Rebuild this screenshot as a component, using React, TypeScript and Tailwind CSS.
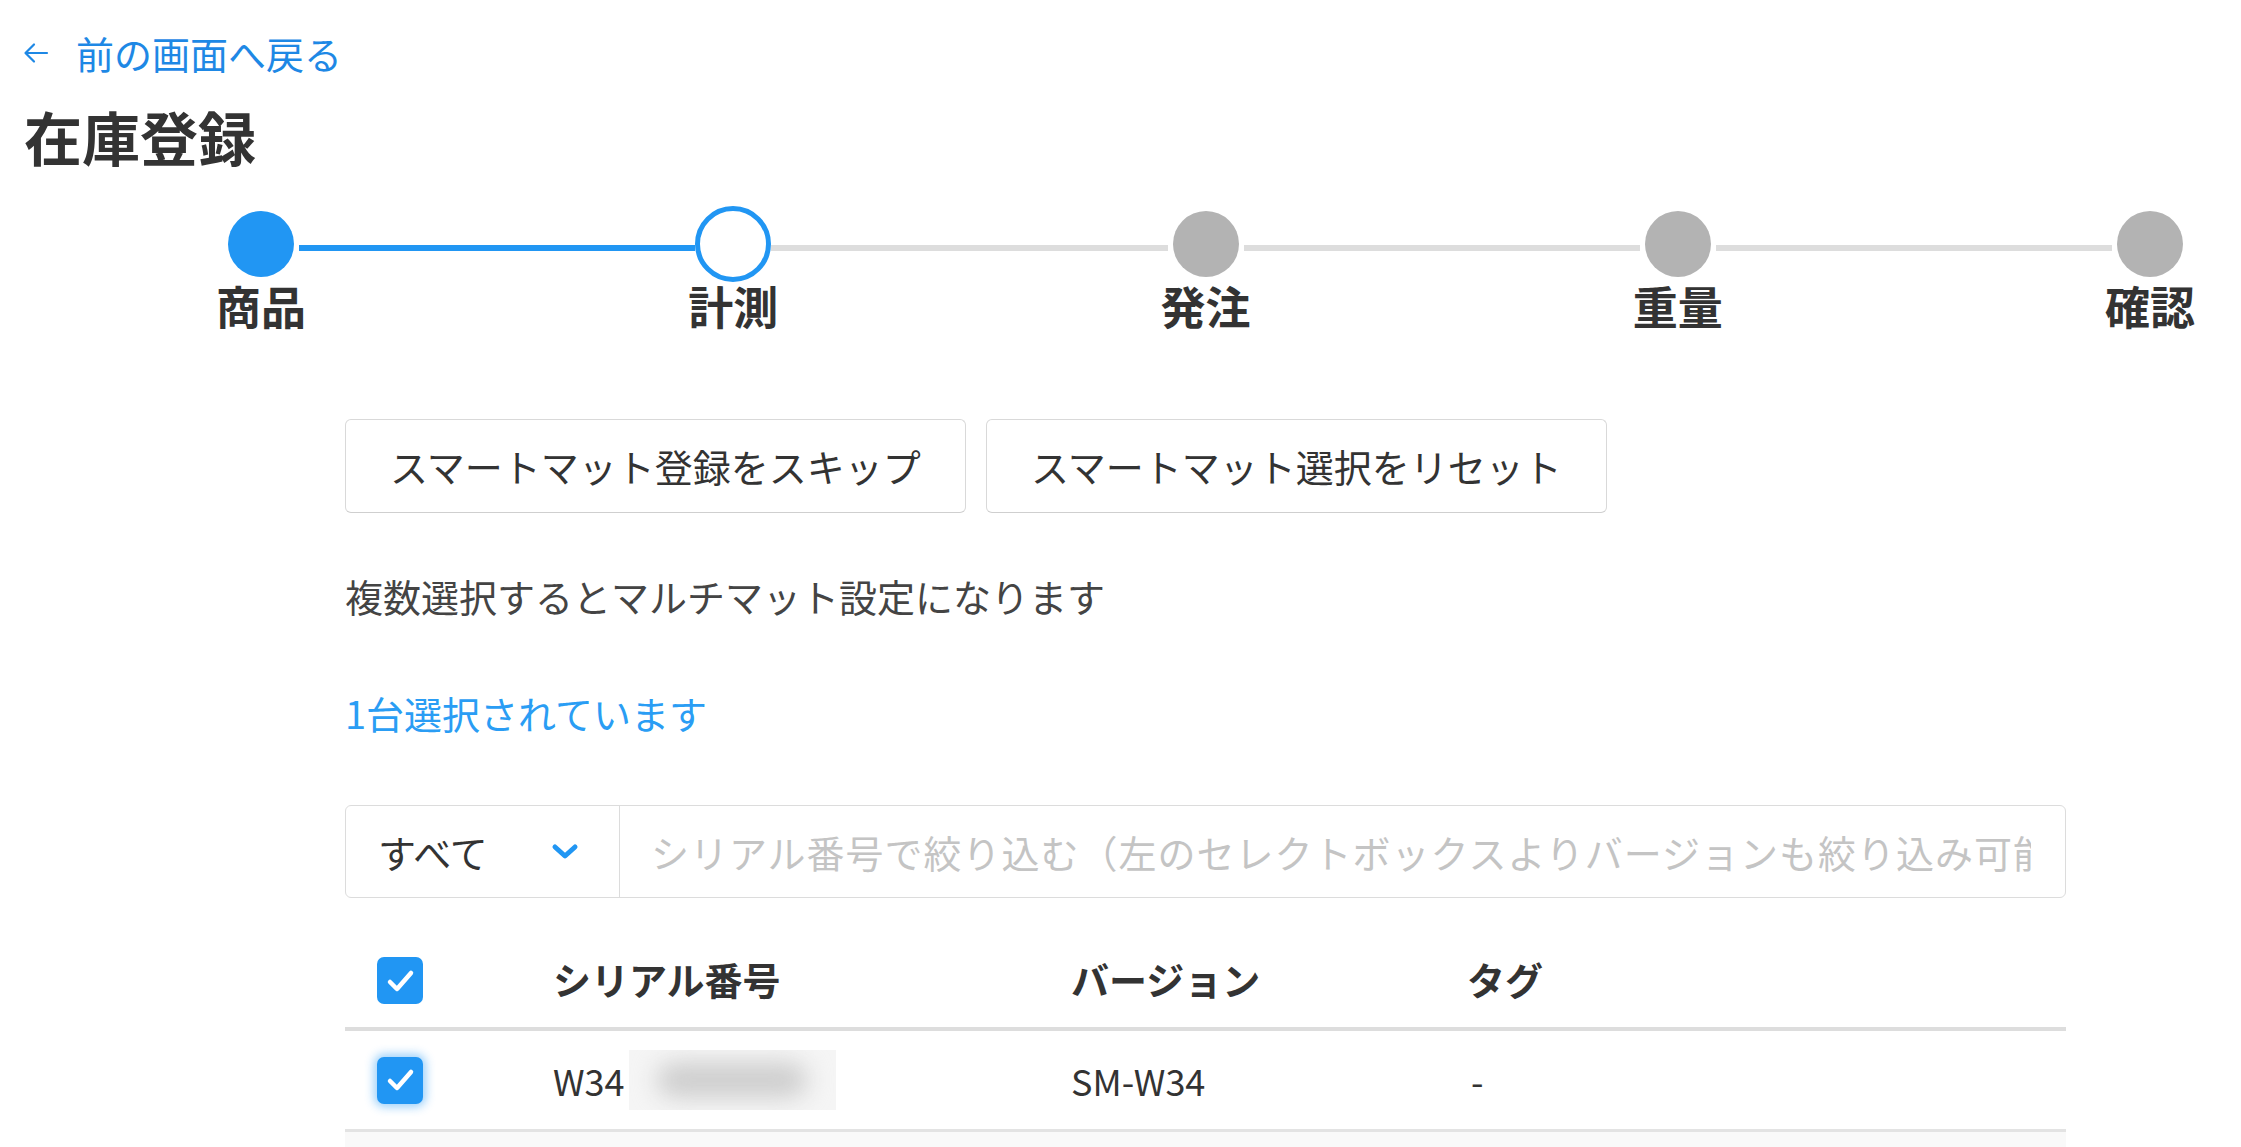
import { Fragment } from 'react';

type StepState = 'done' | 'current' | 'todo';

const steps: { label: string; state: StepState }[] = [
  { label: '商品', state: 'done' },
  { label: '計測', state: 'current' },
  { label: '発注', state: 'todo' },
  { label: '重量', state: 'todo' },
  { label: '確認', state: 'todo' },
];

function StepDot({ state }: { state: StepState }) {
  if (state === 'done') return <div className="w-[66px] h-[66px] rounded-full bg-[#2196f3]" />;
  if (state === 'current')
    return <div className="w-[76px] h-[76px] rounded-full border-[5px] border-[#2196f3] bg-white" />;
  return <div className="w-[66px] h-[66px] rounded-full bg-[#b3b3b3]" />;
}

function Check({ glow }: { glow?: boolean }) {
  return (
    <div
      className={`w-[46px] h-[47px] rounded-[7px] bg-[#2196f3] flex items-center justify-center ${
        glow ? 'shadow-[0_0_10px_3px_rgba(33,150,243,0.45)]' : ''
      }`}
    >
      <svg width="34" height="34" viewBox="0 0 34 34" fill="none" stroke="white" strokeWidth="4.5" strokeLinecap="round" strokeLinejoin="round">
        <path d="M7 18l7 7L28 9" />
      </svg>
    </div>
  );
}

export default function App() {
  return (
    <div className="min-h-screen w-full bg-white text-[#333] font-['Noto_Sans_CJK_JP',sans-serif] overflow-hidden">
      {/* ヘッダー */}
      <div className="pl-[22px] pt-[34px]">
        <a className="flex items-center h-[38px] text-[#1e88e5] text-[38px] leading-none cursor-pointer">
          <svg width="26" height="24" viewBox="0 0 26 24" fill="none" stroke="#1e88e5" strokeWidth="2.2" strokeLinecap="round" strokeLinejoin="round" className="ml-[1px]">
            <path d="M24 12H3" />
            <path d="M11 3.5L2.5 12L11 20.5" />
          </svg>
          <span className="ml-[27px]">前の画面へ戻る</span>
        </a>
        <h1 className="mt-[35px] pl-[2px] text-[58px] font-bold leading-none">在庫登録</h1>
      </div>

      {/* ステッパー */}
      <div className="flex items-start ml-[216px] w-[1979px] mt-[41px]">
        {steps.map((s, i) => (
          <Fragment key={s.label}>
            {i > 0 && (
              <div
                className={`flex-1 h-[6px] mt-[39px] -mx-[7px] ${i === 1 ? 'bg-[#2196f3]' : 'bg-[#dddddd]'}`}
              />
            )}
            <div className="w-[90px] shrink-0 flex flex-col items-center">
              <div className="h-[76px] flex items-center justify-center">
                <StepDot state={s.state} />
              </div>
              <div className="mt-[1px] text-[45px] font-bold leading-none text-[#333] whitespace-nowrap">
                {s.label}
              </div>
            </div>
          </Fragment>
        ))}
      </div>

      {/* 本体 */}
      <div className="ml-[345px] w-[1721px]">
        <div className="mt-[91px] flex gap-[20px]">
          <button className="h-[94px] px-[44px] border border-[#d9d9d9] border-b-[#cfcfcf] rounded-[6px] bg-white text-[38px] leading-none text-[#333] whitespace-nowrap">
            スマートマット登録をスキップ
          </button>
          <button className="h-[94px] px-[44px] border border-[#d9d9d9] border-b-[#cfcfcf] rounded-[6px] bg-white text-[38px] leading-none text-[#333] whitespace-nowrap">
            スマートマット選択をリセット
          </button>
        </div>

        <p className="mt-[64px] text-[38px] leading-none text-[#444]">複数選択するとマルチマット設定になります</p>
        <p className="mt-[79px] text-[38px] leading-none text-[#2a9df4]">1台選択されています</p>

        <div className="mt-[73px] h-[93px] flex border border-[#dcdcdc] rounded-[6px] overflow-hidden">
          <div className="w-[274px] shrink-0 flex items-center justify-between pl-[32px] pr-[39px] border-r border-[#dcdcdc]">
            <span className="text-[38px] leading-none text-[#333]">すべて</span>
            <svg width="30" height="20" viewBox="0 0 30 20" fill="none" stroke="#2196f3" strokeWidth="5" strokeLinecap="round" strokeLinejoin="round">
              <path d="M5 5l10 9L25 5" />
            </svg>
          </div>
          <input
            className="flex-1 min-w-0 pl-[31px] pr-[34px] text-[38px] tracking-[1px] leading-none text-[#333] outline-none placeholder:text-[#c4c4c4]"
            placeholder="シリアル番号で絞り込む（左のセレクトボックスよりバージョンも絞り込み可能）"
          />
        </div>

        {/* テーブル */}
        <div className="mt-[36px]">
          <div className="h-[97px] flex items-center border-b-[4px] border-[#dddddd] text-[38px] font-bold leading-none">
            <div className="w-[208px] shrink-0 pl-[32px]">
              <Check />
            </div>
            <div className="w-[518px] shrink-0 -mt-[4px]">シリアル番号</div>
            <div className="w-[396px] shrink-0 -mt-[4px]">バージョン</div>
            <div className="flex-1 -mt-[4px]">タグ</div>
          </div>
          <div className="h-[101px] flex items-center border-b-[3px] border-[#e3e3e3] text-[36px] leading-none text-[#333]">
            <div className="w-[208px] shrink-0 pl-[32px]">
              <Check glow />
            </div>
            <div className="w-[518px] shrink-0 flex items-center">
              <span>W34</span>
              <span className="ml-[4px] w-[207px] h-[60px] bg-[#f5f5f5] flex items-center justify-center overflow-hidden">
                <span className="w-[150px] h-[34px] rounded-full bg-[#cccccc] blur-md" />
              </span>
            </div>
            <div className="w-[396px] shrink-0">SM-W34</div>
            <div className="flex-1 pl-[4px]">-</div>
          </div>
          <div className="h-[60px] bg-[#f9f9f9]" />
        </div>
      </div>
    </div>
  );
}
